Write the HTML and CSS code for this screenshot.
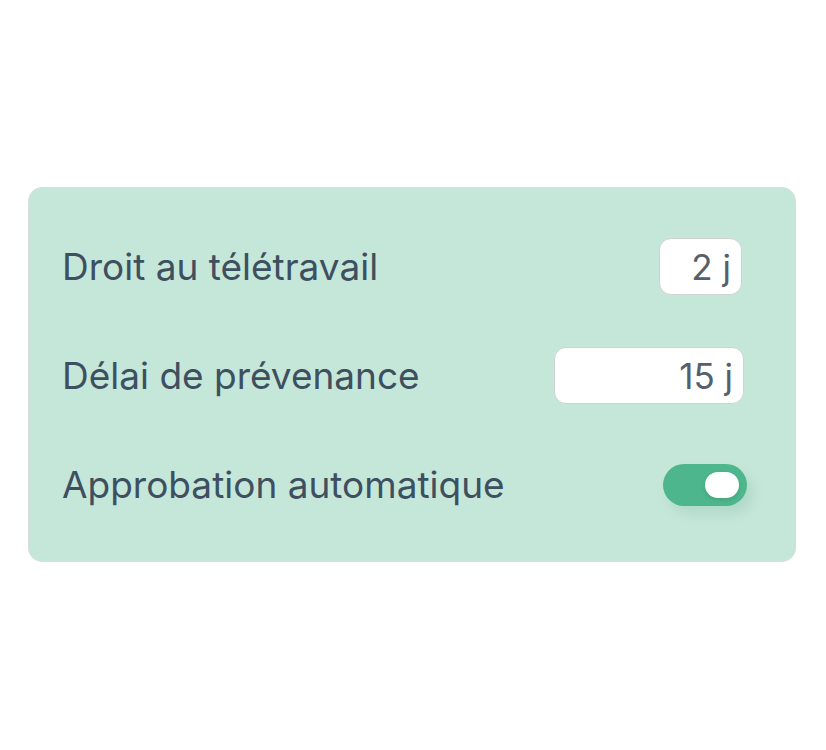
FILE: index.html
```html
<!DOCTYPE html>
<html lang="fr">
<head>
    <meta charset="UTF-8">
    <meta name="viewport" content="width=device-width, initial-scale=1.0">
    <title>Paramètres télétravail</title>
    <link rel="stylesheet" href="styles.css">
</head>
<body>
    <div class="settings-card">
        <div class="setting-row">
            <label for="remote-days">Droit au télétravail</label>
            <input type="text" id="remote-days" class="value-input small" value="2 j">
        </div>

        <div class="setting-row">
            <label for="notice-days">Délai de prévenance</label>
            <input type="text" id="notice-days" class="value-input wide" value="15 j">
        </div>

        <div class="setting-row">
            <span>Approbation automatique</span>
            <button type="button" class="toggle on" aria-pressed="true">
                <span class="knob"></span>
            </button>
        </div>
    </div>
</body>
</html>
```

FILE: styles.css
```css
body {
    font-family: "Inter", "Open Sans", sans-serif;
    margin: 0;
    padding: 0;
    background-color: #fff;
}

.settings-card {
    width: 768px;
    box-sizing: border-box;
    margin: 187px 0 0 28px;
    padding: 50px 48px 48px 33px;
    background-color: #c5e7da;
    border: 1px solid #d9dedc;
    border-radius: 14px;
    display: flex;
    flex-direction: column;
    gap: 52px;
}

.setting-row {
    display: flex;
    align-items: center;
    justify-content: space-between;
    height: 57px;
    font-size: 37px;
    color: #3e4f5f;
}

.value-input {
    height: 57px;
    box-sizing: border-box;
    padding: 0 10px;
    border: 1px solid #cfd3d3;
    border-radius: 12px;
    background-color: #fff;
    font-family: inherit;
    font-size: 35px;
    color: #575f6b;
    text-align: right;
    outline: none;
}

.value-input.small {
    width: 83px;
    margin-right: 5px;
}

.value-input.wide {
    width: 190px;
    margin-right: 3px;
}

.toggle {
    position: relative;
    width: 84px;
    height: 42px;
    padding: 0;
    border: none;
    border-radius: 21px;
    background-color: #4db68c;
    box-shadow: 6px 8px 12px rgba(60, 140, 110, 0.15);
    cursor: pointer;
}

.toggle .knob {
    position: absolute;
    top: 8px;
    right: 8px;
    width: 34px;
    height: 26px;
    border-radius: 13px;
    background-color: #fff;
    box-shadow: 0 2px 4px rgba(0, 0, 0, 0.1);
}
```
